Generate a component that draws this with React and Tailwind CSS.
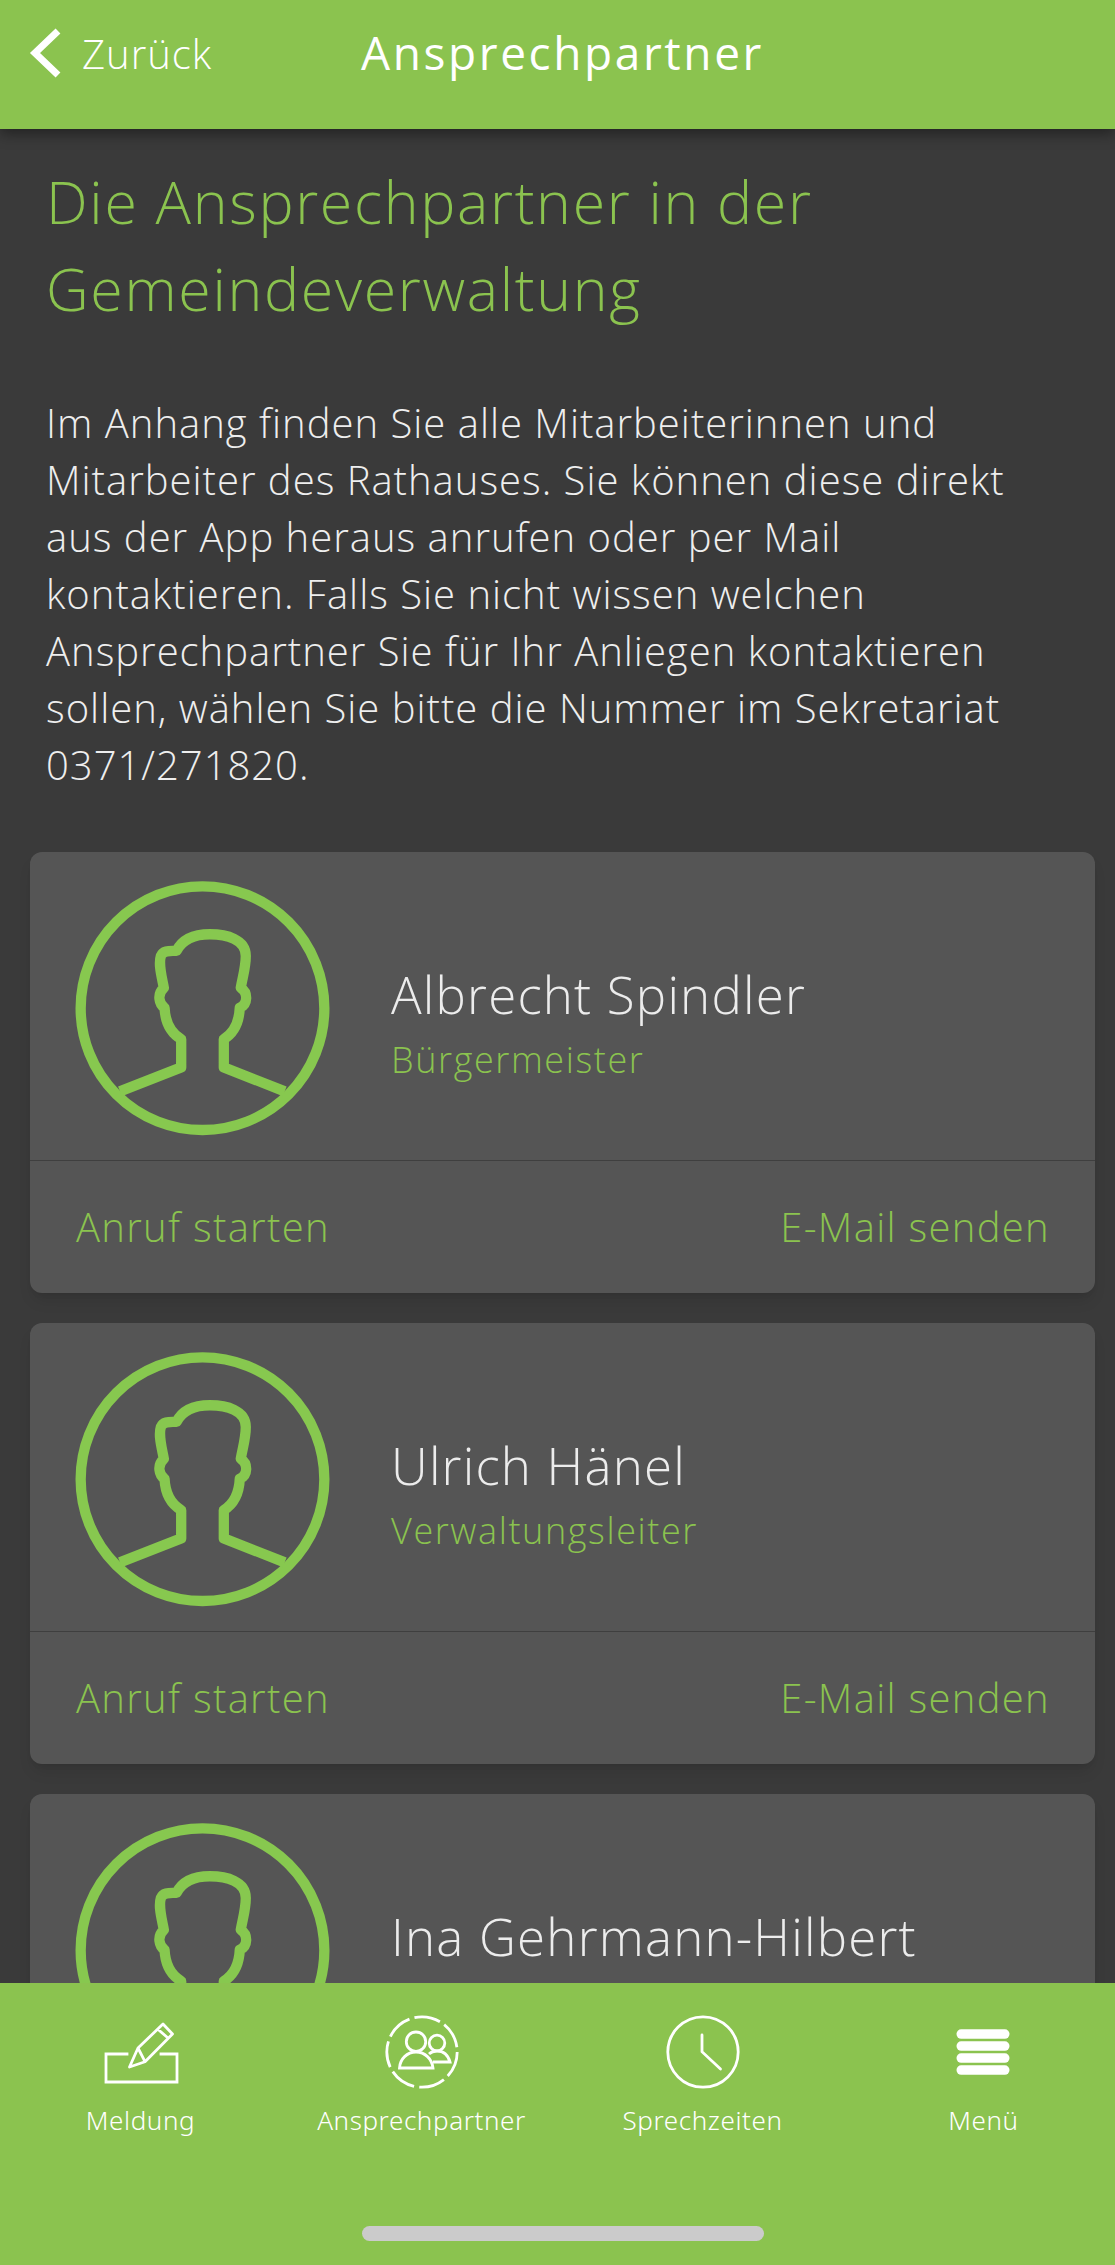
const personas = [
    { nombre: "Albrecht Spindler", cargo: "Bürgermeister" },
    { nombre: "Ulrich Hänel", cargo: "Verwaltungsleiter" },
    { nombre: "Ina Gehrmann-Hilbert", cargo: "" },
];

const Avatar = () => (
    <svg viewBox="165 125 766 766" className="w-[255px] h-[255px] shrink-0" fill="none" stroke="#87c84f" strokeWidth="31" strokeLinejoin="round">
        <circle cx="548" cy="507" r="366" />
        <path d="M300 757 L484 685 L484 600 C450 580 436 550 434 506 C418 495 410 465 432 446 C425 410 415 375 423 350 C430 332 450 335 470 335 C490 295 530 285 570 285 C620 285 678 300 678 350 C678 385 668 415 663 446 C685 460 685 495 660 506 C658 550 645 580 612 600 L612 685 L795 757" />
    </svg>
);

const Tarjeta = ({ nombre, cargo }) => (
    <div className="h-[441px] shrink-0 bg-[#555555] rounded-xl shadow-lg flex flex-col">
        <div className="h-[309px] flex items-center pt-[5px] pl-[45px] border-b border-[#3f3f3f]">
            <Avatar />
            <div className="ml-[61px] pt-[28px]">
                <div className="text-[51px] leading-[66px] tracking-[1.2px] text-[#ececec] font-light">{nombre}</div>
                <div className="h-[50px] mt-[8px] text-[36px] leading-[50px] tracking-[1.6px] text-[#8bc34f] font-light">{cargo}</div>
            </div>
        </div>
        <div className="flex-1 flex items-center justify-between pl-[46px] pr-[45px] text-[40px] tracking-[1.3px] text-[#8bc34f] font-light">
            <span>Anruf starten</span>
            <span>E-Mail senden</span>
        </div>
    </div>
);

const NavItem = ({ label, children }) => (
    <div className="flex flex-col items-center">
        <svg viewBox="0 0 80 80" className="w-[80px] h-[80px]" fill="none" stroke="white" strokeWidth="2.8">
            {children}
        </svg>
        <span className="mt-[5px] text-[26px] leading-[40px] tracking-[0.6px] text-white font-light font-['Noto_Sans',sans-serif] whitespace-nowrap">{label}</span>
    </div>
);

export default function App() {
    return (
        <div className="w-[1115px] h-[2265px] flex flex-col overflow-hidden bg-[#3a3a3a] font-['Open_Sans',sans-serif]">
            <header className="h-[129px] shrink-0 bg-[#8bc34f] shadow-[0_4px_14px_rgba(0,0,0,0.45)] z-10 flex items-start pt-[28px] text-white">
                <svg viewBox="0 0 36 50" className="ml-[28px] w-[36px] h-[50px] shrink-0" fill="none" stroke="white" strokeWidth="7">
                    <path d="M30 3 L7 25 L30 47" />
                </svg>
                <span className="w-[131px] ml-[18px] mt-[-2px] text-[40px] tracking-[1px] font-light leading-[56px] whitespace-nowrap">Zurück</span>
                <span className="ml-[148px] mt-[-4px] text-[46px] tracking-[2.6px] leading-[56px] font-normal whitespace-nowrap">Ansprechpartner</span>
            </header>

            <main className="flex-1 min-h-0 overflow-hidden pl-[30px] pr-[20px] flex flex-col">
                <h1 className="pl-[16px] mt-[29px] text-[59px] leading-[87px] tracking-[1.7px] text-[#8bc34f] font-light">
                    Die Ansprechpartner in der<br />Gemeindeverwaltung
                </h1>
                <p className="pl-[16px] mt-[62px] text-[40px] leading-[57px] tracking-[1px] text-[#eeeeee] font-light whitespace-nowrap">
                    Im Anhang finden Sie alle Mitarbeiterinnen und<br />
                    Mitarbeiter des Rathauses. Sie können diese direkt<br />
                    aus der App heraus anrufen oder per Mail<br />
                    kontaktieren. Falls Sie nicht wissen welchen<br />
                    Ansprechpartner Sie für Ihr Anliegen kontaktieren<br />
                    sollen, wählen Sie bitte die Nummer im Sekretariat<br />
                    0371/271820.
                </p>
                <div className="mt-[59px] flex flex-col gap-[30px]">
                    {personas.map((p) => (
                        <Tarjeta key={p.nombre} nombre={p.nombre} cargo={p.cargo} />
                    ))}
                </div>
            </main>

            <footer className="h-[282px] shrink-0 bg-[#8bc34f] z-10 flex flex-col pt-[32px]">
                <div className="grid grid-cols-[repeat(4,281px)]">
                    <NavItem label="Meldung">
                        <path d="M26 39 H5 V67 H76 V39 H60" strokeLinecap="square" />
                        <path d="M28.5 52 L37 33 L62 9 L71.5 19 L44 46.7 Z M37 33 L44 46.7 M56.6 14 L67 23" strokeLinejoin="round" />
                    </NavItem>
                    <NavItem label="Ansprechpartner">
                        <circle cx="40" cy="37" r="35.2" strokeDasharray="26.4 5.2" />
                        <circle cx="34" cy="26.7" r="9.7" />
                        <path d="M17.5 53 C18 44 25 37 34 37 C43 37 50 44 51 53 Z" />
                        <circle cx="55" cy="28" r="7.8" />
                        <path d="M51 47 H68 C66 40 61 36 55 36 C52 36 49 37 47 39" />
                    </NavItem>
                    <NavItem label="Sprechzeiten">
                        <circle cx="40" cy="37" r="35.2" />
                        <path d="M39 20 V36.7 L57.5 54" strokeLinecap="round" />
                    </NavItem>
                    <NavItem label="Menü">
                        <g fill="white" stroke="none">
                            <rect x="12.5" y="14.3" width="53" height="9.5" rx="4.7" />
                            <rect x="12.5" y="26.3" width="53" height="9.5" rx="4.7" />
                            <rect x="12.5" y="38.3" width="53" height="9.5" rx="4.7" />
                            <rect x="12.5" y="50.3" width="53" height="9.5" rx="4.7" />
                        </g>
                    </NavItem>
                </div>
                <div className="mt-auto mb-[24px] ml-[362px] w-[402px] h-[15px] rounded-full bg-[#cbcbcb]" />
            </footer>
        </div>
    );
}
